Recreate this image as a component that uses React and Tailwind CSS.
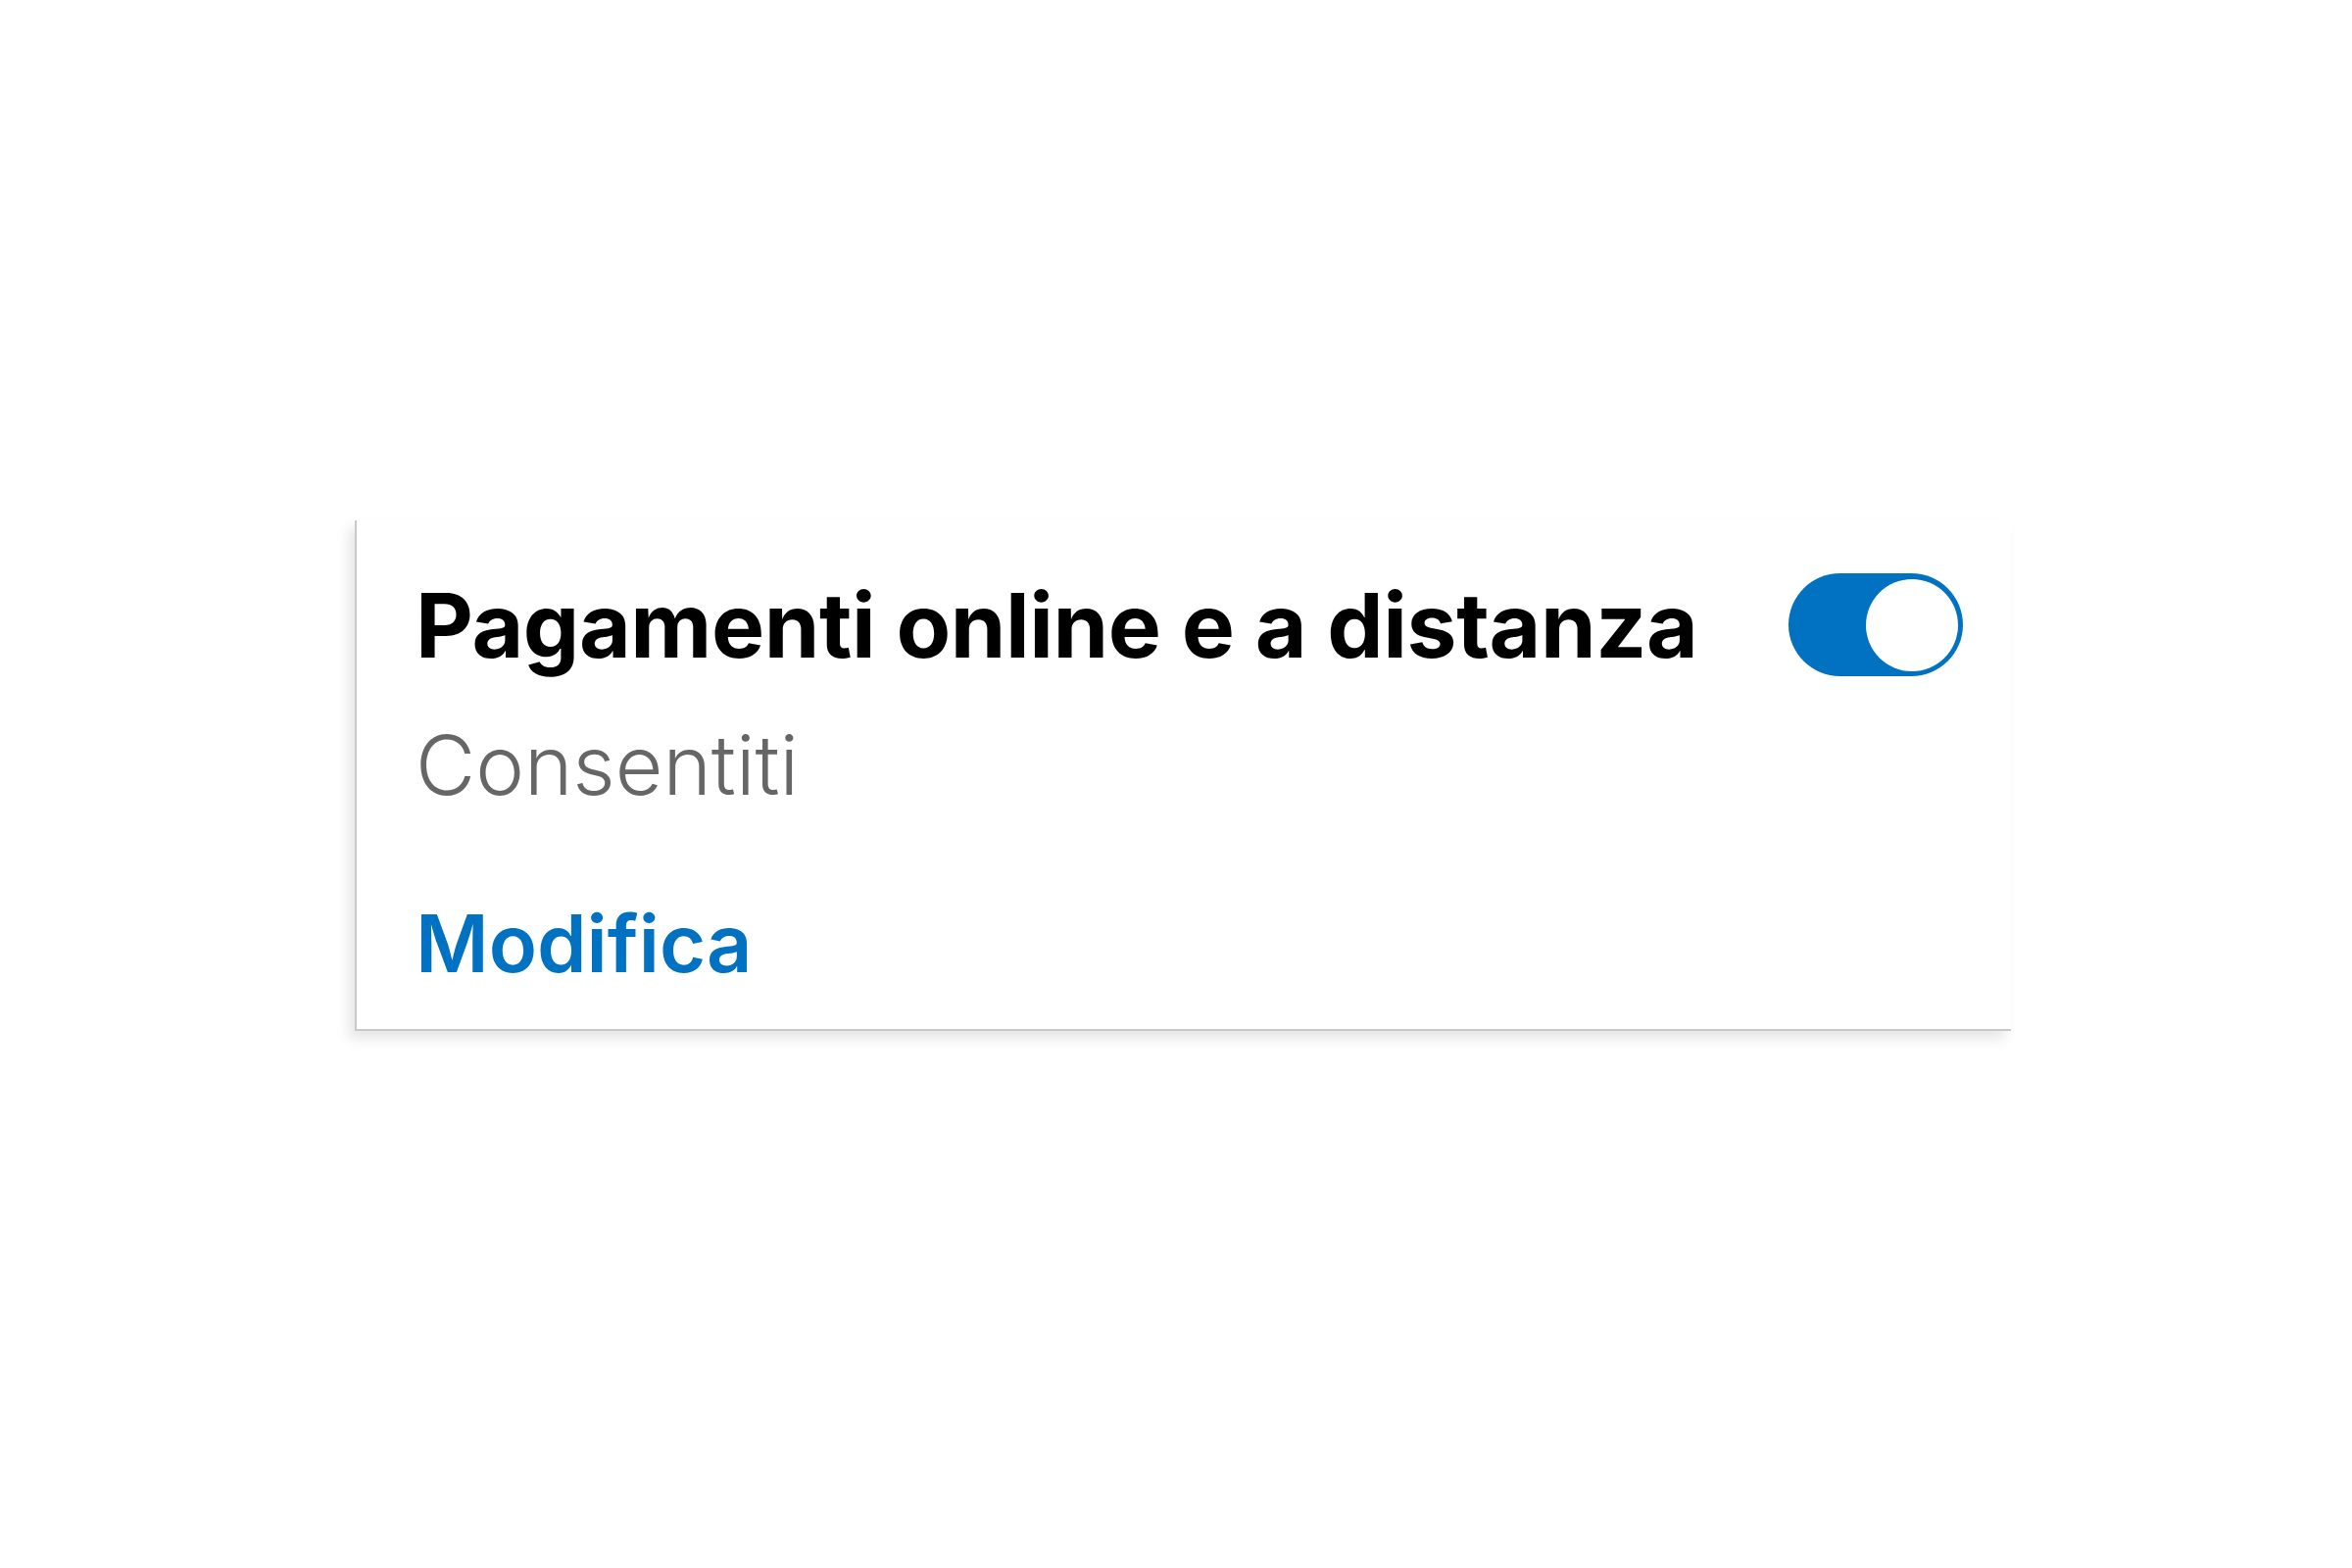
export default function App() {
  return (
    <div className="w-[2400px] h-[1600px] bg-white pt-[531px] pl-[362px]" style={{ fontFamily: 'Inter, "Noto Sans", sans-serif' }}>
      <div className="w-[1690px] h-[521px] bg-white border-l-2 border-b-2 border-[#c9c9c9] shadow-[-6px_8px_12px_rgba(0,0,0,0.10)] pl-[60px] pt-[54px]">
        <div className="flex items-center gap-[93px]">
          <h1 className="text-[91px] leading-[92px] font-bold text-black tracking-[-0.4px]">Pagamenti online e a distanza</h1>
          <div className="relative w-[178px] h-[105px] rounded-full bg-[#0171c2]">
            <div className="absolute right-[5px] top-[6px] w-[94px] h-[94px] rounded-full bg-white"></div>
          </div>
        </div>
        <p className="mt-[49px] text-[84px] leading-[84px] font-light text-[#666666]">Consentiti</p>
        <p className="mt-[100px] text-[81px] leading-[81px] font-semibold text-[#0171c2]">Modifica</p>
      </div>
    </div>
  );
}
